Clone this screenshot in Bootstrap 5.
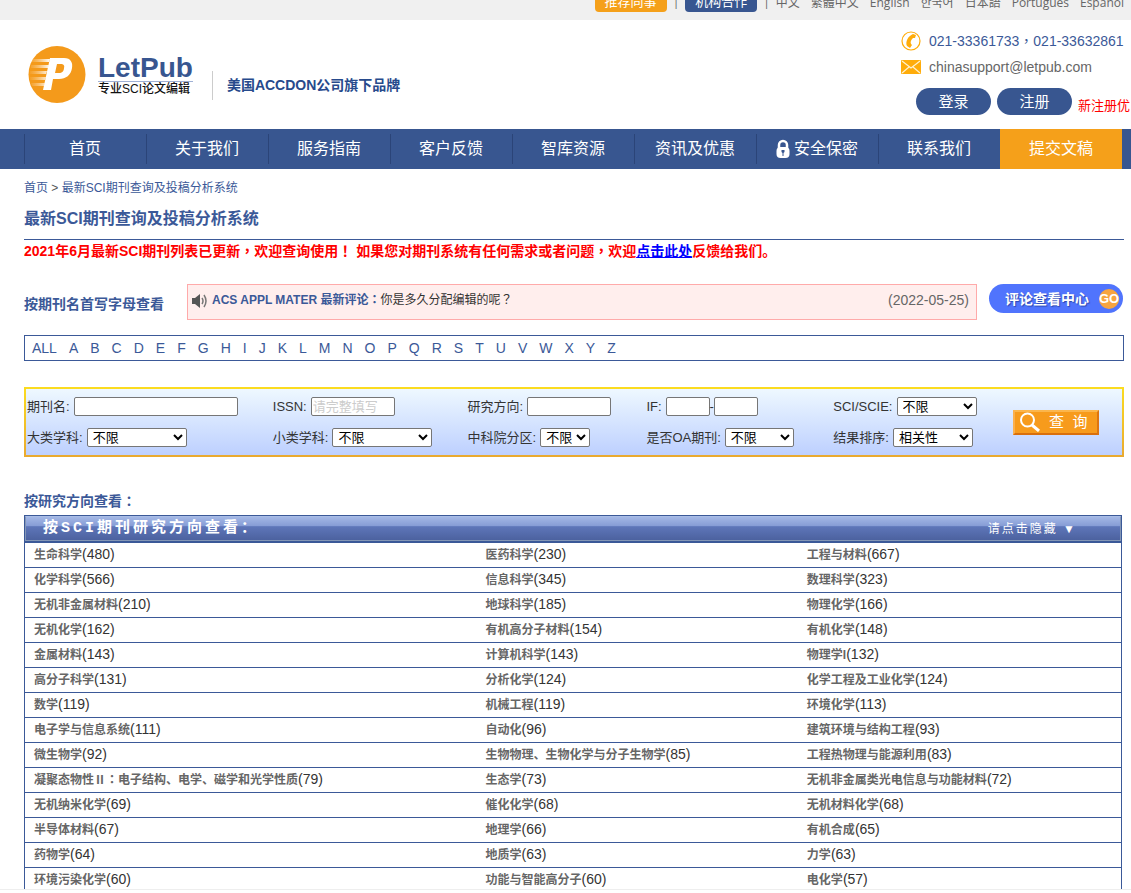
<!DOCTYPE html>
<html lang="zh-CN">
<head>
<meta charset="utf-8">
<meta name="viewport" content="width=device-width, initial-scale=1">
<title>最新SCI期刊查询及投稿分析系统</title>
<link href="https://cdn.jsdelivr.net/npm/bootstrap@5.3.0/dist/css/bootstrap.min.css" rel="stylesheet">
<style>
:root{--navy:#385690;--ink:#3b5998;--amber:#f5a01a}
body{font-family:"Liberation Sans","Noto Sans CJK SC",sans-serif;font-size:13px;line-height:20px;color:#333;background:#fff}
a{text-decoration:none}
.pn{font-family:"Noto Sans CJK TC",sans-serif;line-height:1}
.top-strip{height:20px;background:#f0f0f0;font:12px/21px "Open Sans","Noto Sans CJK SC","Noto Sans CJK KR",sans-serif;padding:0 7px 8px;color:#666;gap:6px}
.top-strip a{color:#666}
.top-strip .pill{width:72px;height:22px;line-height:23px;border-radius:4px;color:#fff;text-align:center;font-size:13px}
.langs{gap:11px;line-height:19px}
.bg-amber{background:var(--amber)}
.bg-navy{background:var(--navy)}
.site-head{height:109px;padding-left:28px}
.logo-name{font-size:28px;line-height:28px;font-weight:700;color:var(--navy);border-bottom:1px solid #9fb0d4;height:28px}
.logo-sub{font-size:12px;line-height:14px;color:#111;font-weight:500}
.motto{border-left:1px solid #ccc;height:29px;padding-left:14px;margin:22px 0 0 19px;font-size:14px;line-height:29px;font-weight:700;color:#274a8c}
.contact{width:230px;font-size:14px;padding-top:11px}
.contact a{color:#666;line-height:20px}
.contact .tel{color:var(--ink)}
.mail-row{margin:6px 0 11px}
.account{gap:6px;padding-left:15px}
.promo{color:#f00;font-size:13px}
.round-btn{width:75px;height:27px;border:0;border-radius:14px;background:var(--navy);color:#fff;font-size:15px;line-height:27px;padding:0}
.main-nav{background:var(--navy);padding:0 9px 0 24px}
.main-nav a{height:40px;line-height:40px;font-size:16px;color:#fff;background:linear-gradient(#2b4478,#2b4478) 0 5px/1px 30px no-repeat;display:flex;justify-content:center;align-items:center}
.main-nav li{flex:1 1 0}
.main-nav .submit{background:var(--amber)}
.page-body{padding:9px 7px 0 24px}
.crumbs{font-size:12px;color:#555}
.crumbs a,.letters a{color:var(--ink)}
h1{font-size:16px;line-height:24px;font-weight:700;color:var(--ink);margin:9px 0 0;padding-bottom:8px;border-bottom:1px solid var(--ink)}
.alert-line{color:#f00;font-size:14px;font-weight:700;line-height:22px;margin-bottom:22px}
.alert-line a{color:#00f;text-decoration:underline}
h2{font-size:14px;line-height:20px;font-weight:700;color:var(--ink);margin:0}
.news-row{gap:12px;padding-right:1px}
.letter-title{width:151px}
.news{height:36px;border:1px solid #faa;background:#ffeeed;padding:0 7px 0 4px;line-height:30px;font-size:12px}
.news a{color:var(--ink);font-weight:700}
.news time{font-size:14px;color:#666}
.center-btn{width:134px;height:29px;border:0;border-radius:15px;background:#5074fd;color:#fff;font-weight:700;font-size:14px;padding:0 4px 0 16px;text-shadow:1px 1px 1px #2c48b0}
.go{width:20px;height:20px;border-radius:50%;background:#f7a440;font-size:13px;line-height:20px;text-shadow:none}
.letters{border:1px solid var(--ink);height:26px;padding:0 7px;gap:12px;font-size:14px;line-height:25px;margin:15px 0 26px}
.search{height:70px;border:2px solid;border-image:linear-gradient(#fbdc20,#e9a930) 2;background:linear-gradient(#eef8ff,#bdd0ff);display:grid;grid-template-columns:246fr 195fr 179fr 187fr 180fr 109fr;grid-template-rows:19px 19px;row-gap:12px;padding:8px 0 0 1px}
.field{display:flex;align-items:center;white-space:nowrap}
.field label{margin-right:4px}
.field input,.field select{height:19px;border:1px solid #767676;border-radius:2px;background-color:#fff;font-size:13px;line-height:16px;color:#000;padding:0 1px}
.field input::placeholder{color:#ccc}
.fw-44{width:44px}.fw-50{width:50px}.fw-69{width:69px}.fw-80{width:80px}.fw-84{width:84px}.fw-100{width:100px}.fw-164{width:164px}
.query{grid-column:6;grid-row:1/3;width:86px;height:25px;align-self:center;border:2px solid;border-color:#fbb64c #dd7510 #d96f0c #fbb04c;background:#f79b1c;color:#fff;font-size:15px;line-height:20px;padding:0 0 0 4px;white-space:pre}
.topics-title{margin:34px 0 4px}
.topics{border:1px solid var(--ink);border-bottom:0;width:calc(100% - 2px);margin:0;table-layout:fixed}
.topics td{height:25px;border-bottom:1px solid var(--ink);padding:0 0 2px 9px;font-size:14px;line-height:22px;color:#333;white-space:nowrap}
.topics td a{font-size:12px;line-height:18px;font-weight:700;color:#666}
.topics th{height:26px;padding:0;border-bottom:2px solid var(--ink)}
.bar{height:25px;border:1px solid #8396b6;border-top-color:#a9bde6;background:linear-gradient(#a3b7e5,#879dd6 38%,#5e76b9 42%,#4c629f);color:#fff;padding:0 43px 0 17px;letter-spacing:3px}
.bar b{font:700 15px/20px "Liberation Mono","Noto Sans CJK SC",monospace}
.bar button{background:none;border:0;color:#fff;padding:0;font-size:12px;letter-spacing:2px;font-weight:400}
.c1{width:41.2%}.c2{width:29.3%}
.page-foot{height:4px;border-top:1px solid #eee}
</style>
</head>
<body class="vh-100 d-flex flex-column overflow-hidden">
<div class="top-strip d-flex justify-content-end align-items-end overflow-hidden flex-shrink-0">
  <a class="pill bg-amber" href="#">推荐同事</a><span>|</span>
  <a class="pill bg-navy" href="#">机构合作</a><span>|</span>
  <div class="langs d-flex"><a href="#">中文</a><a href="#">繁體中文</a><a href="#">English</a><a href="#">한국어</a><a href="#">日本語</a><a href="#">Português</a><a href="#">Español</a></div>
</div>
<header class="site-head d-flex flex-shrink-0">
  <a class="d-flex align-items-center" href="#">
    <svg width="58" height="58" viewBox="0 0 58 58" aria-hidden="true"><defs><linearGradient id="fade"><stop offset="0" stop-color="#fbd5a0" stop-opacity=".1"/><stop offset="1" stop-color="#fff"/></linearGradient></defs><circle cx="29" cy="28.500" r="28.500" fill="#f49a1b"/><g fill="url(#fade)"><path d="M4 13h18l-1 3H4zM3 19h18l-1 3H3zM2 25h17l-1 3H2zM2 31h16l-1 3H2zM3 37h14l-1 3H4z"/></g><path fill="#fff" fill-rule="evenodd" d="M22 12h14c7 0 9 5 8 10-1 7-6 11-13 11h-6l-2 11h-8zM29 18l-2 9h4c3 0 5-2 5-5 1-3-1-4-3-4z"/></svg>
    <span class="ms-2 ps-1"><span class="d-block logo-name">LetPub</span><span class="d-block logo-sub">专业SCI论文编辑</span></span>
  </a>
  <div class="align-self-center motto">美国ACCDON公司旗下品牌</div>
  <div class="contact ms-auto overflow-hidden text-nowrap">
    <div class="d-flex align-items-center gap-2"><svg width="20" height="20" viewBox="0 0 20 20" fill="none" stroke="#ffac0a" aria-hidden="true"><circle cx="10" cy="10" r="9" stroke-width="1.200"/><path fill="#ffac0a" stroke="none" d="M12 3l3 1-1 3-2 0c-2 2-3 4-2 6l1 1-2 3-3-2c-2-4 1-10 6-12z"/></svg><a class="tel" href="#">021-33361733<span class="pn" lang="zh-TW">，</span>021-33632861</a></div>
    <div class="mail-row d-flex align-items-center gap-2"><svg width="20" height="14" viewBox="0 0 20 14" aria-hidden="true"><rect width="20" height="14" rx="1" fill="#ffac0a"/><path d="M1 1l9 7 9-7M1 13l7-6M19 13l-7-6" fill="none" stroke="#fff2cf" stroke-width="1.200"/></svg><a href="#">chinasupport@letpub.com</a></div>
    <div class="account d-flex"><button class="round-btn" type="button">登录</button><button class="round-btn" type="button">注册</button><span class="promo pt-2">新注册优</span></div>
  </div>
</header>
<nav class="main-nav flex-shrink-0"><ul class="list-unstyled d-flex m-0">
  <li><a href="#">首页</a></li><li><a href="#">关于我们</a></li><li><a href="#">服务指南</a></li><li><a href="#">客户反馈</a></li><li><a href="#">智库资源</a></li><li><a href="#">资讯及优惠</a></li>
  <li><a href="#"><svg class="me-1" width="14" height="20" viewBox="0 0 14 20" aria-hidden="true"><path d="M3 9V6a4 4 0 018 0v3" fill="none" stroke="#fff" stroke-width="2.500"/><rect x=".500" y="8" width="13" height="11" rx="4" fill="#fff"/><path d="M5.500 11h3v2l-1 1v3h-1v-3l-1-1z" fill="#385690"/></svg>安全保密</a></li>
  <li><a href="#">联系我们</a></li><li><a class="submit" href="#">提交文稿</a></li>
</ul></nav>
<main class="page-body flex-fill overflow-hidden">
  <div class="crumbs"><a href="#">首页</a> &gt; <a href="#">最新SCI期刊查询及投稿分析系统</a></div>
  <h1>最新SCI期刊查询及投稿分析系统</h1>
  <p class="alert-line">2021年6月最新SCI期刊列表已更新<span class="pn" lang="zh-TW">，</span>欢迎查询使用<span class="pn" lang="zh-TW">！</span> 如果您对期刊系统有任何需求或者问题<span class="pn" lang="zh-TW">，</span>欢迎<a href="#">点击此处</a>反馈给我们。</p>
  <div class="news-row d-flex">
    <h2 class="letter-title align-self-center pt-1">按期刊名首写字母查看</h2>
    <div class="news d-flex flex-fill">
      <svg class="mt-2 me-1" width="16" height="16" viewBox="0 0 16 16" aria-hidden="true"><path fill="#555" d="M0 5h3l5-4v14l-5-4H0z"/><path d="M10 5q2 3 0 6M12 2q4 6 0 12" fill="none" stroke="#777" stroke-width="1.500"/></svg>
      <a href="#">ACS APPL MATER 最新评论<span class="pn" lang="zh-TW">：</span></a><span>你是多久分配编辑的呢<span class="pn" lang="zh-TW">？</span></span><time class="ms-auto" datetime="2022-05-25">(2022-05-25)</time>
    </div>
    <button class="center-btn d-flex align-items-center justify-content-between text-nowrap" type="button">评论查看中心<span class="go">GO</span></button>
  </div>
  <div class="letters d-flex"><a href="#">ALL</a><a href="#">A</a><a href="#">B</a><a href="#">C</a><a href="#">D</a><a href="#">E</a><a href="#">F</a><a href="#">G</a><a href="#">H</a><a href="#">I</a><a href="#">J</a><a href="#">K</a><a href="#">L</a><a href="#">M</a><a href="#">N</a><a href="#">O</a><a href="#">P</a><a href="#">Q</a><a href="#">R</a><a href="#">S</a><a href="#">T</a><a href="#">U</a><a href="#">V</a><a href="#">W</a><a href="#">X</a><a href="#">Y</a><a href="#">Z</a></div>
  <form class="search">
    <div class="field"><label for="name">期刊名:</label><input id="name" class="fw-164" type="text"></div>
    <div class="field"><label for="issn">ISSN:</label><input id="issn" class="fw-84" type="text" placeholder="请完整填写"></div>
    <div class="field"><label for="area">研究方向:</label><input id="area" class="fw-84" type="text"></div>
    <div class="field"><label for="if1">IF:</label><input id="if1" class="fw-44" type="text">-<input class="fw-44" type="text" aria-label="IF 上限"></div>
    <div class="field"><label for="sci">SCI/SCIE:</label><select id="sci" class="fw-80"><option>不限</option></select></div>
    <div class="field"><label for="cat1">大类学科:</label><select id="cat1" class="fw-100"><option>不限</option></select></div>
    <div class="field"><label for="cat2">小类学科:</label><select id="cat2" class="fw-100"><option>不限</option></select></div>
    <div class="field"><label for="zone">中科院分区:</label><select id="zone" class="fw-50"><option>不限</option></select></div>
    <div class="field"><label for="oa">是否OA期刊:</label><select id="oa" class="fw-69"><option>不限</option></select></div>
    <div class="field"><label for="sort">结果排序:</label><select id="sort" class="fw-80"><option>相关性</option></select></div>
    <button class="query d-flex align-items-center" type="button"><svg class="me-2" width="22" height="20" viewBox="0 0 22 20" fill="none" stroke="#fff" aria-hidden="true"><circle cx="8.500" cy="8" r="6.500" stroke-width="2"/><path d="M13 13l7 6" stroke-width="3"/></svg>查  询</button>
  </form>
  <h2 class="topics-title">按研究方向查看<span class="pn" lang="zh-TW">：</span></h2>
  <table class="topics">
    <colgroup><col class="c1"><col class="c2"><col></colgroup>
    <thead><tr><th colspan="3"><div class="bar d-flex justify-content-between align-items-center"><b>按SCI期刊研究方向查看：</b><button type="button">请点击隐藏 ▼</button></div></th></tr></thead>
    <tbody>
      <tr><td><a href="#">生命科学</a>(480)</td><td><a href="#">医药科学</a>(230)</td><td><a href="#">工程与材料</a>(667)</td></tr>
      <tr><td><a href="#">化学科学</a>(566)</td><td><a href="#">信息科学</a>(345)</td><td><a href="#">数理科学</a>(323)</td></tr>
      <tr><td><a href="#">无机非金属材料</a>(210)</td><td><a href="#">地球科学</a>(185)</td><td><a href="#">物理化学</a>(166)</td></tr>
      <tr><td><a href="#">无机化学</a>(162)</td><td><a href="#">有机高分子材料</a>(154)</td><td><a href="#">有机化学</a>(148)</td></tr>
      <tr><td><a href="#">金属材料</a>(143)</td><td><a href="#">计算机科学</a>(143)</td><td><a href="#">物理学I</a>(132)</td></tr>
      <tr><td><a href="#">高分子科学</a>(131)</td><td><a href="#">分析化学</a>(124)</td><td><a href="#">化学工程及工业化学</a>(124)</td></tr>
      <tr><td><a href="#">数学</a>(119)</td><td><a href="#">机械工程</a>(119)</td><td><a href="#">环境化学</a>(113)</td></tr>
      <tr><td><a href="#">电子学与信息系统</a>(111)</td><td><a href="#">自动化</a>(96)</td><td><a href="#">建筑环境与结构工程</a>(93)</td></tr>
      <tr><td><a href="#">微生物学</a>(92)</td><td><a href="#">生物物理、生物化学与分子生物学</a>(85)</td><td><a href="#">工程热物理与能源利用</a>(83)</td></tr>
      <tr><td><a href="#">凝聚态物性Ⅱ<span class="pn" lang="zh-TW">：</span>电子结构、电学、磁学和光学性质</a>(79)</td><td><a href="#">生态学</a>(73)</td><td><a href="#">无机非金属类光电信息与功能材料</a>(72)</td></tr>
      <tr><td><a href="#">无机纳米化学</a>(69)</td><td><a href="#">催化化学</a>(68)</td><td><a href="#">无机材料化学</a>(68)</td></tr>
      <tr><td><a href="#">半导体材料</a>(67)</td><td><a href="#">地理学</a>(66)</td><td><a href="#">有机合成</a>(65)</td></tr>
      <tr><td><a href="#">药物学</a>(64)</td><td><a href="#">地质学</a>(63)</td><td><a href="#">力学</a>(63)</td></tr>
      <tr><td><a href="#">环境污染化学</a>(60)</td><td><a href="#">功能与智能高分子</a>(60)</td><td><a href="#">电化学</a>(57)</td></tr>
    </tbody>
  </table>
</main>
<footer class="page-foot flex-shrink-0"></footer>
<script src="https://cdn.jsdelivr.net/npm/bootstrap@5.3.0/dist/js/bootstrap.bundle.min.js"></script>
</body>
</html>
